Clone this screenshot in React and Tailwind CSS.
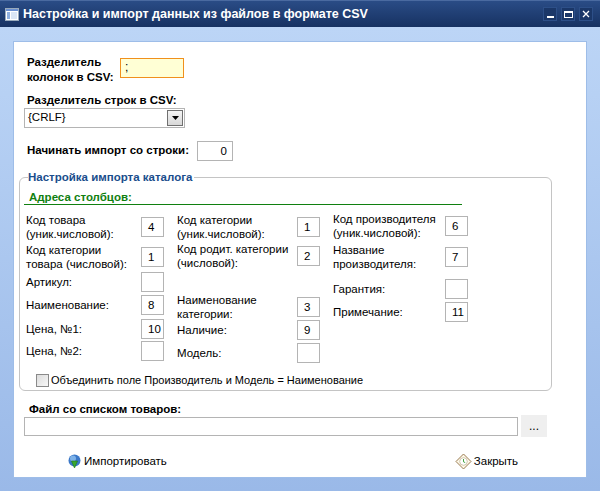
export default function App() {
  const f = { fontFamily: '"Liberation Sans", Arial, sans-serif' };
  const Box = ({ v, cls = "" }) => (
    <div className={"w-[23px] h-[20px] border border-[#b4b4b4] bg-white text-[11.5px] leading-[18px] pl-[6px] text-black shrink-0 " + cls}>{v}</div>
  );
  const Row = ({ label, v, lw, mt }) => (
    <div className={"flex items-center h-[20px] " + mt}>
      <div className="text-[11.5px] leading-[14px] text-black" style={{ width: lw }}>{label}</div>
      <Box v={v} />
    </div>
  );
  return (
    <div className="w-[600px] h-[491px] flex flex-col bg-[#bcd5f6] overflow-hidden" style={f}>
      <div className="h-[27px] shrink-0 flex items-center bg-gradient-to-b from-[#2a4c86] to-[#173262] border-t border-[#4a6aa0] relative">
        <svg width="14" height="13" viewBox="0 0 14 13" className="ml-[5px]">
          <rect x="0.5" y="0.5" width="13" height="12" fill="#fff" stroke="#9ab" />
          <rect x="1" y="1" width="12" height="2" fill="#6a8fd0" />
          <rect x="2" y="4" width="3" height="7" fill="#8fb0e0" />
          <rect x="6" y="4" width="6" height="7" fill="#dbe6f5" />
        </svg>
        <div className="ml-[4px] text-white font-bold text-[12.5px]">Настройка и импорт данных из файлов в формате CSV</div>
        <div className="ml-auto mr-[7px] flex gap-[4px]">
          {["min", "max", "x"].map((k) => (
            <div key={k} className="w-[14px] h-[14px] bg-[#1b3768] border border-[#2d4f88] flex items-center justify-center">
              {k === "min" && <div className="w-[7px] h-[2px] bg-white mt-[5px]" />}
              {k === "max" && <div className="w-[9px] h-[7px] border border-white border-t-2" />}
              {k === "x" && (
                <svg width="8" height="8" viewBox="0 0 8 8"><path d="M1 1L7 7M7 1L1 7" stroke="#fff" strokeWidth="1.3" /></svg>
              )}
            </div>
          ))}
        </div>
      </div>
      <div className="flex-1 px-[13px] pt-[14px] pb-[13px] bg-gradient-to-b from-[#bcd5f6] to-[#9ab9e8]">
        <div className="h-full bg-white border border-[#9ebde8] flex flex-col">
          <div className="flex items-start mt-[13px] ml-[13px]">
            <div className="w-[93px] text-[11.5px] leading-[15px] font-bold text-black">Разделитель колонок в CSV:</div>
            <div className="w-[64px] h-[20px] mt-[3px] bg-[#ffffd5] border border-[#f0901c] text-[12px] leading-[16px] pl-[4px]">;</div>
          </div>
          <div className="mt-[8px] ml-[13px] text-[11.5px] leading-[15px] font-bold text-black">Разделитель строк в CSV:</div>
          <div className="mt-[0px] ml-[10px] w-[161px] h-[20px] border border-[#b4b4b4] flex items-center text-[11.5px] pl-[3px]">
            <span>{"{CRLF}"}</span>
            <div className="ml-auto mr-[1px] w-[16px] h-[16px] bg-gradient-to-b from-[#f4f4f4] to-[#d8d8d8] border border-[#707070] flex items-center justify-center">
              <svg width="7" height="4" viewBox="0 0 7 4"><path d="M0 0H7L3.5 4Z" fill="#000" /></svg>
            </div>
          </div>
          <div className="flex items-center mt-[13px] ml-[13px] h-[20px]">
            <div className="text-[11.5px] font-bold text-black w-[170px]">Начинать импорт со строки:</div>
            <div className="w-[36px] h-[20px] border border-[#b4b4b4] text-[11.5px] leading-[18px] text-right pr-[5px]">0</div>
          </div>

          <div className="relative mt-[16px] ml-[5px] w-[533px] h-[214px] border border-[#c4c4c4] rounded-[6px] shrink-0">
            <div className="absolute -top-[8px] left-[8px] bg-white pr-[2px] text-[11.5px] font-bold text-[#1a4d8c] leading-[14px]">Настройка импорта каталога</div>
            <div className="mt-[12px] ml-[4px] w-[438px] border-b border-[#108010] pl-[5px] text-[11.5px] font-bold text-[#108010] leading-[14px]">Адреса столбцов:</div>
            <div className="flex ml-[6px] mt-[12px]">
              <div className="flex flex-col">
                <Row label="Код товара (уник.числовой):" v="4" lw={115} mt="" />
                <Row label="Код категории товара (числовой):" v="1" lw={115} mt="mt-[10px]" />
                <Row label="Артикул:" v="" lw={115} mt="mt-[5px]" />
                <Row label="Наименование:" v="8" lw={115} mt="mt-[3px]" />
                <Row label="Цена, №1:" v="10" lw={115} mt="mt-[4px]" />
                <Row label="Цена, №2:" v="" lw={115} mt="mt-[2px]" />
              </div>
              <div className="flex flex-col ml-[13px]">
                <Row label="Код категории (уник.числовой):" v="1" lw={120} mt="" />
                <Row label="Код родит. категории (числовой):" v="2" lw={120} mt="mt-[9px]" />
                <Row label="Наименование категории:" v="3" lw={120} mt="mt-[31px]" />
                <Row label="Наличие:" v="9" lw={120} mt="mt-[3px]" />
                <Row label="Модель:" v="" lw={120} mt="mt-[3px]" />
              </div>
              <div className="flex flex-col ml-[13px] -mt-[1px]">
                <Row label="Код производителя (уник.числовой):" v="6" lw={112} mt="" />
                <Row label="Название производителя:" v="7" lw={112} mt="mt-[11px]" />
                <Row label="Гарантия:" v="" lw={112} mt="mt-[12px]" />
                <Row label="Примечание:" v="11" lw={112} mt="mt-[3px]" />
              </div>
            </div>
            <div className="flex items-center ml-[16px] mt-[9px]">
              <div className="w-[13px] h-[13px] border border-[#8a8a8a] bg-gradient-to-br from-[#dcdcdc] to-[#f8f8f8]" />
              <span className="ml-[2px] text-[11px] text-black">Объединить поле Производитель и Модель = Наименование</span>
            </div>
          </div>

          <div className="mt-[11px] ml-[15px] text-[11.5px] font-bold text-black leading-[14px]">Файл со списком товаров:</div>
          <div className="flex items-center ml-[10px] mt-[-1px]">
            <div className="w-[494px] h-[19px] border border-[#b4b4b4]" />
            <div className="ml-[3px] w-[26px] h-[22px] bg-[#efefef] text-[12px] text-center leading-[22px]">...</div>
          </div>
          <div className="flex items-center mt-[16px] text-[11.5px] text-black">
            <div className="ml-[53px] flex items-center">
              <svg width="15" height="15" viewBox="0 0 15 15">
                <circle cx="7.5" cy="6.5" r="6" fill="#3b78c8" />
                <circle cx="6" cy="4.5" r="3" fill="#8fc0f0" opacity="0.8" />
                <path d="M4.5 7H10.5L7.5 14Z" fill="#3aa830" stroke="#1f7a1a" strokeWidth="0.6" />
              </svg>
              <span className="ml-[2px]">Импортировать</span>
            </div>
            <div className="ml-[288px] flex items-center">
              <svg width="17" height="17" viewBox="0 0 17 17">
                <path d="M8.5 1L16 8.5L8.5 16L1 8.5Z" fill="#fdf8e8" stroke="#9a7a50" strokeWidth="1" />
                <circle cx="8.5" cy="8.5" r="3.8" fill="#fff" stroke="#b0a080" strokeWidth="0.6" />
                <path d="M8.5 6V8.8L10.2 9.6" stroke="#2a9a2a" strokeWidth="0.9" fill="none" />
              </svg>
              <span className="ml-[2px]">Закрыть</span>
            </div>
          </div>
        </div>
      </div>
    </div>
  );
}
